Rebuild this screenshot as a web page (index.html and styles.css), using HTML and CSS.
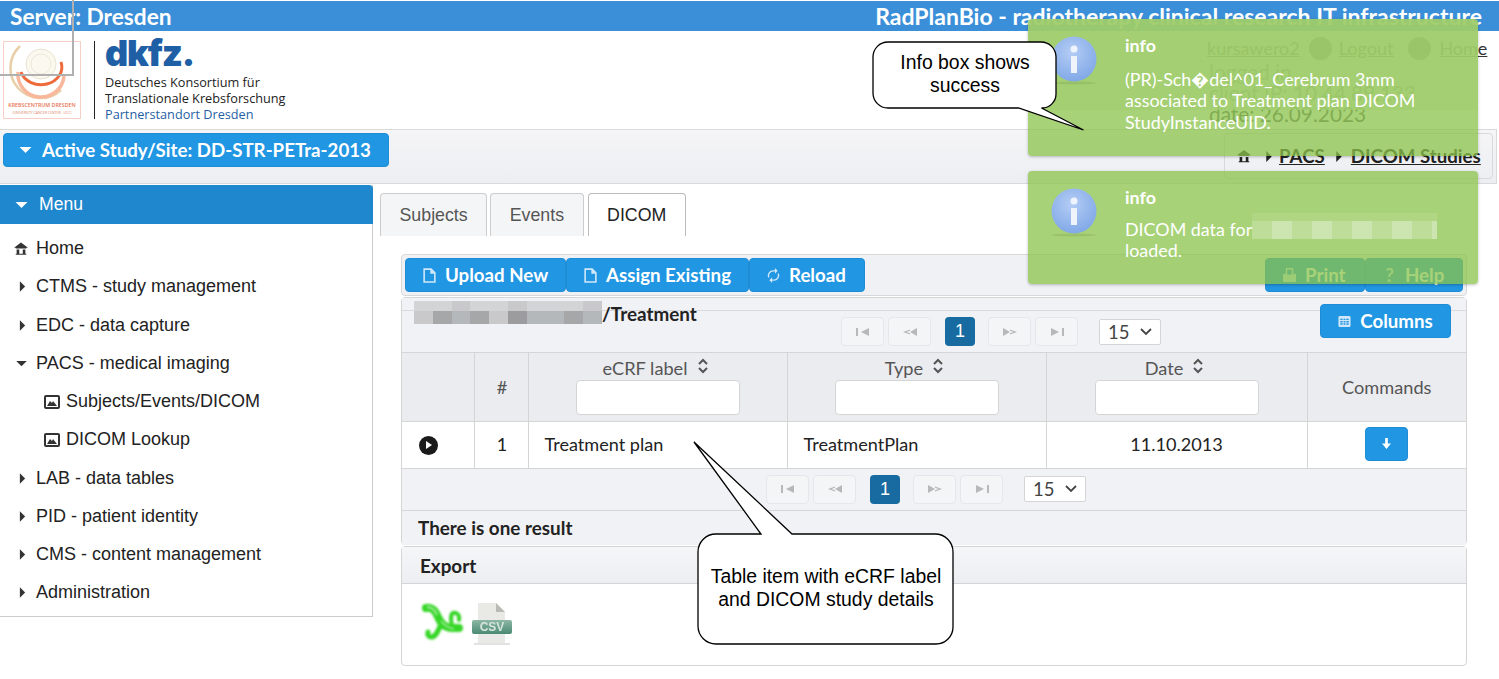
FILE: index.html
```html
<!DOCTYPE html>
<html lang="en">
<head>
    <meta charset="UTF-8">
    <title>RadPlanBio - DICOM Studies</title>
    <link rel="stylesheet" href="styles.css">
</head>
<body>
    <!-- Icon sprite -->
    <svg class="sprite" xmlns="http://www.w3.org/2000/svg">
        <symbol id="i-down" viewBox="0 0 12 8"><path d="M0 1h12L6 7z"/></symbol>
        <symbol id="i-right" viewBox="0 0 8 12"><path d="M1 0v12l6-6z"/></symbol>
        <symbol id="i-home" viewBox="0 0 16 14"><path d="M8 0 0 6h2v1h12V6h2zM3 8h3v5h4V8h3v5h1v1H2v-1h1z"/></symbol>
        <symbol id="i-image" viewBox="0 0 16 14"><path fill-rule="evenodd" d="M2 0h12a2 2 0 0 1 2 2v10a2 2 0 0 1-2 2H2a2 2 0 0 1-2-2V2a2 2 0 0 1 2-2zm0 2v10h12V2zm1 9 3-5 2 2 1-2 4 5z"/></symbol>
        <symbol id="i-page" viewBox="0 0 12 14"><path fill="none" stroke="currentColor" stroke-width="1.5" d="M1 1h6.500L11 4.500V13H1zM7.500 1v3.500H11"/></symbol>
        <symbol id="i-reload" viewBox="0 0 14 16"><path fill="none" stroke="currentColor" stroke-width="1.500" d="M2 10a5 5 0 0 1 5-7h2M12 6a5 5 0 0 1-5 7H5"/><path fill="currentColor" d="M8.500 0v6l3-3zM5.500 10v6l-3-3z"/></symbol>
        <symbol id="i-sort" viewBox="0 0 12 16"><path fill="none" stroke="currentColor" stroke-width="2" d="m2 6 4-4 4 4M2 10l4 4 4-4"/></symbol>
        <symbol id="i-chev" viewBox="0 0 12 8"><path fill="none" stroke="currentColor" stroke-width="1.800" d="m1 1 5 5 5-5"/></symbol>
        <symbol id="i-first" viewBox="0 0 14 8"><path d="M0 0h2v8H0zM13 0v8L5 4z"/></symbol>
        <symbol id="i-prev" viewBox="0 0 14 8"><path d="M14 0v8L7 4zM7 1.500v1.200L3.500 4 7 5.300v1.200L0 4z"/></symbol>
        <symbol id="i-next" viewBox="0 0 14 8"><path d="M0 0v8l7-4zM7 1.500v1.200L10.500 4 7 5.300v1.200L14 4z"/></symbol>
        <symbol id="i-last" viewBox="0 0 14 8"><path d="M14 0h-2v8h2zM1 0v8l8-4z"/></symbol>
    </svg>

    <!-- Top line -->
    <div class="topbar">
        <span>Server: Dresden</span>
        <span class="topbar-title">RadPlanBio - radiotherapy clinical research IT infrastructure</span>
    </div>

    <!-- Logos and user -->
    <div class="brand">
        <div class="logos">
            <svg class="kcd" viewBox="0 0 78 78" xmlns="http://www.w3.org/2000/svg">
                <rect x=".5" y=".5" width="77" height="77" fill="#fff" stroke="#f6cfc6"/>
                <circle cx="38" cy="23" r="15" fill="#fbf8f0" stroke="#e9e2d0"/>
                <circle cx="38" cy="23" r="10" fill="none" stroke="#eee8d9"/>
                <path d="M17 5A29 29 0 0 0 58 49" fill="none" stroke="#e8cfa8" stroke-width="2.500"/>
                <path d="M15 31a23 23 0 0 0 46 4" fill="none" stroke="#f9b79c" stroke-width="3.500"/>
                <path d="M18 31a20 17 0 0 0 40-10" fill="none" stroke="#ee6a3a" stroke-width="3"/>
                <text class="kcd-name" x="39" y="66" text-anchor="middle">KREBSCENTRUM DRESDEN</text>
                <text class="kcd-sub" x="39" y="73" text-anchor="middle">(UNIVERSITY CANCER CENTER - UCC)</text>
            </svg>
            <div class="dkfz">
                <div class="dkfz-mark">dkfz.</div>
                <div>Deutsches Konsortium für</div>
                <div>Translationale Krebsforschung</div>
                <div class="dkfz-site">Partnerstandort Dresden</div>
            </div>
        </div>
        <div class="user">
            <div class="user-links">
                <a>kursawero2</a>
                <span class="round"></span>
                <a>Logout</a>
                <span class="round"></span>
                <a>Home</a>
            </div>
            <div class="user-info">logged in</div>
            <div class="user-info">client IP: 10.44.89.133</div>
            <div class="user-info">date: 26.09.2023</div>
        </div>
    </div>

    <!-- Study selector and breadcrumb -->
    <div class="studybar">
        <button class="btn study"><svg class="ic-down"><use href="#i-down"/></svg>Active Study/Site: DD-STR-PETra-2013</button>
        <div class="crumbs">
            <svg class="crumb-home"><use href="#i-home"/></svg>
            <svg class="crumb-sep"><use href="#i-right"/></svg>
            <a>PACS</a>
            <svg class="crumb-sep"><use href="#i-right"/></svg>
            <a>DICOM Studies</a>
        </div>
    </div>

    <div class="main">
        <!-- Menu -->
        <div class="sidebar">
            <div class="menu-head"><svg class="ic-down"><use href="#i-down"/></svg>Menu</div>
            <div class="menu-list">
                <div class="menu-item"><svg class="ic-home"><use href="#i-home"/></svg>Home</div>
                <div class="menu-item"><svg class="ic-right"><use href="#i-right"/></svg>CTMS - study management</div>
                <div class="menu-item"><svg class="ic-right"><use href="#i-right"/></svg>EDC - data capture</div>
                <div class="menu-item"><svg class="ic-open"><use href="#i-down"/></svg>PACS - medical imaging</div>
                <div class="menu-item sub"><svg class="ic-image"><use href="#i-image"/></svg>Subjects/Events/DICOM</div>
                <div class="menu-item sub"><svg class="ic-image"><use href="#i-image"/></svg>DICOM Lookup</div>
                <div class="menu-item"><svg class="ic-right"><use href="#i-right"/></svg>LAB - data tables</div>
                <div class="menu-item"><svg class="ic-right"><use href="#i-right"/></svg>PID - patient identity</div>
                <div class="menu-item"><svg class="ic-right"><use href="#i-right"/></svg>CMS - content management</div>
                <div class="menu-item"><svg class="ic-right"><use href="#i-right"/></svg>Administration</div>
            </div>
        </div>

        <div class="content">
            <div class="tabs">
                <div class="tab">Subjects</div>
                <div class="tab">Events</div>
                <div class="tab active">DICOM</div>
            </div>

            <div class="tabpanel">
                <div class="toolbar">
                    <button class="btn"><svg class="ic-btn"><use href="#i-page"/></svg>Upload New</button>
                    <button class="btn"><svg class="ic-btn"><use href="#i-page"/></svg>Assign Existing</button>
                    <button class="btn"><svg class="ic-btn"><use href="#i-reload"/></svg>Reload</button>
                    <div class="spacer"></div>
                    <button class="btn print">
                        <svg class="ic-btn" viewBox="0 0 14 16"><path fill="currentColor" d="M3 0h8v6h2a1 1 0 0 1 1 1v7a1 1 0 0 1-1 1H1a1 1 0 0 1-1-1V7a1 1 0 0 1 1-1h2zm1.500 1.500V7h5V1.500z"/></svg>Print
                    </button>
                    <button class="btn help"><span class="q">?</span>Help</button>
                </div>

                <div class="datatable">
                    <div class="tablehead">
                        <div class="title">
                            <div class="mosaic">
                                <i class="m1"></i><i class="m1"></i><i class="m2"></i><i class="m1"></i><i class="m1"></i><i class="m2"></i><i class="m1"></i><i class="m1"></i><i class="m1"></i><i class="m2"></i>
                                <i class="m2"></i><i class="m4"></i><i class="m3"></i><i class="m4"></i><i class="m2"></i><i class="m5"></i><i class="m3"></i><i class="m3"></i><i class="m4"></i><i class="m3"></i>
                            </div>/Treatment
                        </div>
                        <div class="pager pager-top">
                            <span class="pg"><svg><use href="#i-first"/></svg></span>
                            <span class="pg"><svg><use href="#i-prev"/></svg></span>
                            <span class="pg-cur">1</span>
                            <span class="pg"><svg><use href="#i-next"/></svg></span>
                            <span class="pg"><svg><use href="#i-last"/></svg></span>
                            <span class="rows">15<svg><use href="#i-chev"/></svg></span>
                        </div>
                        <button class="btn columns">
                            <svg class="ic-btn" viewBox="0 0 14 14"><path fill="currentColor" fill-rule="evenodd" d="M2 1h10a1.500 1.500 0 0 1 1.500 1.500v9A1.500 1.500 0 0 1 12 13H2a1.500 1.500 0 0 1-1.500-1.500v-9A1.500 1.500 0 0 1 2 1zm.5 3v1.500h2.500V4zm3.500 0v1.500h2V4zm3 0v1.500h2.500V4zM2.500 6.500V8h2.500V6.500zm3.500 0V8h2V6.500zm3 0V8h2.500V6.500zM2.500 9v1.500h2.500V9zM6 9v1.500h2V9zm3 0v1.500h2.500V9z"/></svg>Columns
                        </button>
                    </div>

                    <table class="grid">
                        <colgroup>
                            <col class="c-toggle"><col class="c-num"><col class="c-col"><col class="c-col"><col class="c-date"><col>
                        </colgroup>
                        <thead>
                            <tr>
                                <th></th>
                                <th class="num">#</th>
                                <th><div class="th-label">eCRF label<svg class="ic-sort"><use href="#i-sort"/></svg></div><div class="filter"></div></th>
                                <th><div class="th-label">Type<svg class="ic-sort"><use href="#i-sort"/></svg></div><div class="filter"></div></th>
                                <th><div class="th-label">Date<svg class="ic-sort"><use href="#i-sort"/></svg></div><div class="filter"></div></th>
                                <th>Commands</th>
                            </tr>
                        </thead>
                        <tbody>
                            <tr>
                                <td class="toggle-cell"><span class="toggler"></span></td>
                                <td class="center num">1</td>
                                <td>Treatment plan</td>
                                <td>TreatmentPlan</td>
                                <td class="center">11.10.2013</td>
                                <td class="center">
                                    <button class="btn mini">
                                        <svg viewBox="0 0 10 12"><path fill="currentColor" d="M3.500 0h3v6H10l-5 6-5-6h3.500z"/></svg>
                                    </button>
                                </td>
                            </tr>
                        </tbody>
                    </table>

                    <div class="pager pager-bottom">
                        <span class="pg"><svg><use href="#i-first"/></svg></span>
                        <span class="pg"><svg><use href="#i-prev"/></svg></span>
                        <span class="pg-cur">1</span>
                        <span class="pg"><svg><use href="#i-next"/></svg></span>
                        <span class="pg"><svg><use href="#i-last"/></svg></span>
                        <span class="rows">15<svg><use href="#i-chev"/></svg></span>
                    </div>
                    <div class="tablefoot">There is one result</div>
                </div>

                <div class="export">
                    <div class="export-head">Export</div>
                    <div class="export-body">
                        <svg class="ic-xls" viewBox="0 0 46 46" xmlns="http://www.w3.org/2000/svg">
                            <path d="M6 8c6-1 9 2 12 9 3 7 8 11 14 11h7" fill="none" stroke="#35d626" stroke-width="8" stroke-linecap="round"/>
                            <path d="M22 22c-3 6-5 14-10 15-3 .5-5-2-4-5" fill="none" stroke="#35d626" stroke-width="5" stroke-linecap="round"/>
                            <path d="M32 26c-1-6-2-11 1-13 3-1 7 1 6 7" fill="none" stroke="#35d626" stroke-width="4" stroke-linecap="round"/>
                            <path d="M7 7c5 0 8 3 10 8" fill="none" stroke="#a5eca0" stroke-width="2"/>
                            <path d="M21 21c4 5 7 7 13 8" fill="none" stroke="#a5eca0" stroke-width="1.500"/>
                        </svg>
                        <svg class="ic-csv" viewBox="0 0 42 46" xmlns="http://www.w3.org/2000/svg">
                            <defs>
                                <linearGradient id="csv-band" x1="0" y1="0" x2="0" y2="1">
                                    <stop offset="0" stop-color="#8db7a5"/>
                                    <stop offset="1" stop-color="#4b8a72"/>
                                </linearGradient>
                            </defs>
                            <path d="M7 3h18l9 9v31H7z" fill="#e9e9e6"/>
                            <path d="M25 3l9 9h-9z" fill="#b9b9b5"/>
                            <rect x="1" y="20" width="40" height="14" rx="2" fill="url(#csv-band)"/>
                            <text class="csv-label" x="21" y="31" text-anchor="middle">CSV</text>
                            <path d="M3 44h36" stroke="#e2e2e2" stroke-width="2"/>
                        </svg>
                    </div>
                </div>
            </div>
        </div>
    </div>

    <!-- Grey frame line from the documentation figure -->
    <div class="frame-line"></div>

    <!-- Notifications -->
    <div class="note note-one">
        <svg class="note-icon"><use href="#note-info"/></svg>
        <div class="note-text">
            <div class="note-title">info</div>
            <div>(PR)-Sch�del^01_Cerebrum 3mm associated to Treatment plan DICOM StudyInstanceUID.</div>
        </div>
    </div>
    <div class="note note-two">
        <svg class="note-icon"><use href="#note-info"/></svg>
        <div class="note-text">
            <div class="note-title">info</div>
            <div>DICOM data for<span class="note-blur"></span> loaded.</div>
        </div>
    </div>
    <svg class="sprite" xmlns="http://www.w3.org/2000/svg">
        <defs>
            <radialGradient id="note-ball" cx=".45" cy=".35" r=".7">
                <stop offset="0" stop-color="#b4cdf5"/>
                <stop offset="1" stop-color="#7ea6e6"/>
            </radialGradient>
        </defs>
        <symbol id="note-info" viewBox="0 0 46 50">
            <ellipse cx="23" cy="47" rx="22" ry="1.500" fill="#7fa655" opacity=".35"/>
            <circle cx="23" cy="23" r="22.500" fill="url(#note-ball)"/>
            <circle cx="23" cy="13" r="3.500" fill="#eef3fc"/>
            <rect x="20" y="20" width="6" height="17" fill="#eef3fc"/>
        </symbol>
    </svg>

    <!-- Callouts -->
    <svg class="callout callout-info" viewBox="0 0 216 92" xmlns="http://www.w3.org/2000/svg">
        <path d="M16 1h153a15 15 0 0 1 15 15v37a14 14 0 0 1-14 14h-.5l42 22-65-22H16A15 15 0 0 1 1 52V16A15 15 0 0 1 16 1z" fill="#fff" stroke="#000" stroke-width="1.300"/>
        <text class="callout-text" x="93" y="28" text-anchor="middle">Info box shows</text>
        <text class="callout-text" x="93" y="51" text-anchor="middle">success</text>
    </svg>
    <svg class="callout callout-table" viewBox="0 0 264 206" xmlns="http://www.w3.org/2000/svg">
        <path d="M23 95h45L1 3l98 92h143a18 18 0 0 1 18 18v75a17 17 0 0 1-17 17H23a18 18 0 0 1-18-18v-74a18 18 0 0 1 18-18z" fill="#fff" stroke="#000" stroke-width="1.300"/>
        <text class="callout-text" x="133" y="144" text-anchor="middle">Table item with eCRF label</text>
        <text class="callout-text" x="133" y="167" text-anchor="middle">and DICOM study details</text>
    </svg>
</body>
</html>
```

FILE: styles.css
```css
html, body {
    margin: 0;
    padding: 0;
    background-color: #fff;
    overflow: hidden;
}
body {
    font-family: Lato, "Liberation Sans", sans-serif;
    font-size: 18.100px;
    color: #222;
    height: 679px;
    position: relative;
}
.sprite {
    position: absolute;
    width: 0;
    height: 0;
}

/* Top line */
.topbar {
    display: flex;
    justify-content: space-between;
    align-items: center;
    margin-top: 1px;
    height: 30px;
    padding: 0 17px 0 10px;
    background-color: #3a8fd8;
    color: #fff;
    font-weight: 700;
    font-size: 22.700px;
    white-space: nowrap;
}
.topbar-title {
    font-size: 23px;
}

/* Logos and user */
.brand {
    display: flex;
    justify-content: space-between;
    height: 98px;
}
.logos {
    display: flex;
    padding: 10px 0 0 3px;
}
.kcd {
    width: 78px;
    height: 78px;
}
.kcd-name {
    font-family: "Open Sans", sans-serif;
    font-size: 5.300px;
    font-weight: 600;
    fill: #e8744f;
}
.kcd-sub {
    font-family: "Open Sans", sans-serif;
    font-size: 3.500px;
    fill: #d9856c;
}
.dkfz {
    margin-left: 13px;
    height: 78px;
    padding-left: 10px;
    border-left: 1px solid #222;
    font-family: "Open Sans", sans-serif;
    font-size: 12.700px;
    line-height: 16px;
    color: #222;
    white-space: nowrap;
}
.dkfz-mark {
    height: 35px;
    margin-top: -2px;
    font-family: Inter, sans-serif;
    font-weight: 900;
    font-size: 36px;
    line-height: 28px;
    letter-spacing: -1.200px;
    color: #1f5fa5;
}
.dkfz-site {
    color: #1f5fa5;
}
.user {
    width: 292px;
    padding-top: 7px;
    box-sizing: border-box;
    font-size: 18px;
    color: #333;
}
.user-links {
    display: flex;
    align-items: center;
    height: 20px;
    margin-bottom: 3px;
}
.user-links a {
    text-decoration: underline;
}
.round {
    width: 23px;
    height: 23px;
    margin: 0 7px 0 9px;
    border-radius: 50%;
    background-color: #555;
}
.round + a + .round {
    margin: 0 8px 0 15px;
}
.user-info {
    height: 21px;
    padding-left: 2px;
    color: #666;
    font-size: 20.800px;
    line-height: 21px;
}

/* Study selector and breadcrumb */
.studybar {
    display: flex;
    justify-content: space-between;
    align-items: flex-start;
    height: 55px;
    box-sizing: border-box;
    margin-right: 2px;
    padding: 3px 3px 0 3px;
    border: 1px solid #d9d9d9;
    border-left: 0;
    background: linear-gradient(#f5f5f7, #eceef1);
}
.btn {
    display: inline-flex;
    align-items: center;
    height: 34px;
    padding: 0 17px;
    border: 1px solid #1f8dd6;
    border-radius: 4px;
    background-color: #2196e3;
    color: #fff;
    font-family: Lato, sans-serif;
    font-weight: 700;
    font-size: 18.700px;
    white-space: nowrap;
}
.study {
    width: 386px;
    padding-left: 15px;
}
.ic-down {
    width: 13px;
    height: 8px;
    margin-right: 10px;
    fill: #fff;
}
.crumbs {
    display: flex;
    align-items: center;
    width: 269px;
    height: 46px;
    box-sizing: border-box;
    padding: 0 0 0 12px;
    border: 1px solid #d9d9d9;
    border-radius: 4px;
    margin-left: auto;
    font-weight: 700;
    font-size: 18.700px;
    white-space: nowrap;
}
.crumbs a {
    text-decoration: underline;
}
.crumb-home {
    flex: none;
    width: 14px;
    height: 14px;
    margin-right: 14px;
    fill: #222;
}
.crumb-sep {
    flex: none;
    width: 8px;
    height: 11px;
    margin: 0 6px 0 0;
    fill: #222;
}
.crumbs a + .crumb-sep {
    margin-left: 10px;
    margin-right: 8px;
}

/* Main area */
.main {
    display: flex;
    margin-top: 1px;
}
.sidebar {
    width: 373px;
    height: 432px;
    box-sizing: border-box;
    border-right: 1px solid #ccc;
    border-bottom: 1px solid #ccc;
    font-family: "Liberation Sans", sans-serif;
    font-size: 18px;
}
.menu-head {
    display: flex;
    align-items: center;
    height: 39px;
    margin-right: -1px;
    padding-left: 15px;
    border-top-right-radius: 4px;
    background-color: #1f87cd;
    color: #fff;
    font-size: 17.600px;
}
.menu-head .ic-down {
    margin-right: 11px;
}
.menu-list {
    padding-top: 5.500px;
}
.menu-item {
    display: flex;
    align-items: center;
    height: 38.250px;
    padding-left: 36px;
    position: relative;
    white-space: nowrap;
}
.menu-item svg {
    position: absolute;
    fill: #333;
}
.ic-home {
    left: 14px;
    width: 14px;
    height: 13px;
}
.ic-right {
    left: 19px;
    width: 7px;
    height: 11px;
}
.ic-open {
    left: 16px;
    width: 11px;
    height: 7px;
}
.menu-item.sub {
    padding-left: 66px;
}
.ic-image {
    left: 44px;
    width: 16px;
    height: 14px;
}

/* Tabs */
.content {
    width: 1087px;
    margin-left: 7px;
}
.tabs {
    display: flex;
    gap: 3px;
    margin-top: 8px;
    height: 43px;
    font-family: "Liberation Sans", sans-serif;
    font-size: 17.800px;
}
.tab {
    display: flex;
    align-items: center;
    height: 43px;
    box-sizing: border-box;
    padding: 0 18.500px;
    border: 1px solid #ccc;
    border-bottom: 0;
    border-radius: 4px 4px 0 0;
    background-color: #f4f5f7;
    color: #555;
}
.tab.active {
    margin-left: 1px;
    border-color: #bbb;
    background-color: #fff;
    color: #222;
}
.tabpanel {
    padding: 18px 0 0 21px;
}

/* Toolbar */
.toolbar {
    display: flex;
    height: 42px;
    box-sizing: border-box;
    padding: 3px;
    border: 1px solid #d8d8d8;
    border-radius: 4px;
    background-color: #f0f1f4;
}
.spacer {
    flex: 1;
}
.toolbar .btn {
    width: 161px;
    box-sizing: border-box;
}
.toolbar .btn:nth-child(2) {
    width: 183px;
}
.toolbar .btn:nth-child(3) {
    width: 116px;
}
.toolbar .print {
    width: 100px;
}
.toolbar .help {
    width: 98px;
}
.ic-btn {
    flex: none;
    width: 13px;
    height: 15px;
    margin-right: 9px;
    color: #cfe7f9;
}
.q {
    width: 13px;
    margin-right: 9px;
    color: #cfe7f9;
}

/* Table */
.datatable {
    margin-top: 1px;
    height: 248px;
    box-sizing: border-box;
    border: 1px solid #d5d5d5;
    border-radius: 4px;
}
.tablehead {
    display: flex;
    height: 55px;
    box-sizing: border-box;
    border-bottom: 1px solid #d5d5d5;
    background: linear-gradient(#d9dadd, #d9dadd) 0 12px / 100% 1px no-repeat, #f1f2f5;
}
.title {
    display: flex;
    width: 439px;
    height: 23px;
    flex: none;
    box-sizing: border-box;
    padding: 3px 0 0 12px;
    font-weight: 700;
    font-size: 18.850px;
    line-height: 26px;
}
.mosaic {
    display: grid;
    grid-template-columns: repeat(10, 18.800px);
    grid-template-rows: 10px 13px;
    flex: none;
}
.m1 { background-color: #d3d4d6; }
.m2 { background-color: #c9c9cb; }
.m3 { background-color: #b5b8ba; }
.m4 { background-color: #a6a7a8; }
.m5 { background-color: #9c9c9e; }
.pager {
    display: flex;
    align-items: center;
}
.pager-top {
    height: 29px;
    margin-top: 19px;
}
.pager-bottom {
    height: 42px;
    box-sizing: border-box;
    padding-left: 364px;
    border-bottom: 1px solid #d5d5d5;
    background-color: #f1f2f5;
}
.pg {
    display: flex;
    align-items: center;
    justify-content: center;
    width: 43px;
    height: 29px;
    box-sizing: border-box;
    margin-right: 4px;
    border: 1px solid #e6e7ea;
    border-radius: 4px;
    background-color: #f4f5f7;
}
.pg svg {
    width: 14px;
    height: 8px;
    fill: #b8b8b8;
}
.pg:nth-child(2) {
    margin-right: 14px;
}
.pg-cur {
    display: flex;
    align-items: center;
    justify-content: center;
    width: 30px;
    height: 29px;
    margin-right: 13px;
    border-radius: 4px;
    background-color: #186ba0;
    color: #fff;
    font-family: "Liberation Sans", sans-serif;
    font-size: 18px;
}
.rows {
    display: flex;
    align-items: center;
    justify-content: space-between;
    width: 62px;
    height: 26px;
    box-sizing: border-box;
    margin-left: 17px;
    padding: 0 8px;
    border: 1px solid #d5d5d5;
    border-radius: 2px;
    background-color: #fff;
    color: #444;
    font-size: 18.500px;
}
.rows svg {
    width: 12px;
    height: 8px;
    color: #444;
}
.columns {
    position: relative;
    width: 131px;
    box-sizing: border-box;
    margin: 6px 0 0 159px;
    justify-content: center;
    padding: 0;
}
.grid {
    width: 100%;
    border-collapse: collapse;
    table-layout: fixed;
}
.c-toggle { width: 72px; }
.c-num { width: 54px; }
.c-col { width: 259px; }
.c-date { width: 261px; }
.grid th {
    height: 68px;
    box-sizing: border-box;
    padding: 0;
    border-left: 1px solid #d5d5d5;
    border-bottom: 1px solid #d5d5d5;
    background-color: #ebecf0;
    color: #555;
    font-weight: 400;
    font-size: 18.200px;
    text-align: center;
}
.grid td {
    height: 47px;
    box-sizing: border-box;
    padding: 0 16px 2px;
    border-left: 1px solid #d5d5d5;
    border-bottom: 1px solid #d5d5d5;
}
.grid tr > :first-child {
    border-left: 0;
}
.grid td.center {
    padding: 0 0 2px;
    text-align: center;
}
.grid .num,
.grid td.num {
    padding-left: 2px;
}
.grid td.toggle-cell {
    padding: 0 0 2px 17px;
}
.th-label {
    display: flex;
    align-items: center;
    justify-content: center;
    height: 20px;
    margin-top: -1px;
    padding-right: 4px;
}
.ic-sort {
    width: 12px;
    height: 16px;
    margin: -3px 0 0 9px;
    color: #555;
}
.filter {
    width: 164px;
    height: 35px;
    box-sizing: border-box;
    margin: 2px auto 0;
    border: 1px solid #d5d5d5;
    border-radius: 4px;
    background-color: #fff;
}
.toggler {
    display: inline-flex;
    width: 19px;
    height: 19px;
    border-radius: 50%;
    background-color: #1a1a1a;
    vertical-align: middle;
    position: relative;
}
.toggler::after {
    content: "";
    position: absolute;
    left: 7px;
    top: 5px;
    border-left: 6px solid #fff;
    border-top: 4.500px solid transparent;
    border-bottom: 4.500px solid transparent;
}
.mini {
    width: 43px;
    height: 34px;
    padding: 0;
    justify-content: center;
    vertical-align: middle;
}
.mini svg {
    width: 9px;
    height: 11px;
}
.tablefoot {
    height: 34px;
    padding-left: 16px;
    background-color: #f1f2f5;
    font-weight: 700;
    font-size: 18.850px;
    line-height: 34px;
}

/* Export */
.export {
    margin-top: 1px;
    height: 120px;
    box-sizing: border-box;
    border: 1px solid #d5d5d5;
    border-radius: 4px;
}
.export-head {
    height: 37px;
    box-sizing: border-box;
    padding-left: 18px;
    border-bottom: 1px solid #d5d5d5;
    background: linear-gradient(#f5f6f8, #eceef1);
    font-weight: 700;
    font-size: 18.850px;
    line-height: 37px;
}
.export-body {
    display: flex;
    padding: 16px 0 0 18px;
}
.ic-xls {
    width: 46px;
    height: 46px;
    filter: blur(.8px);
}
.ic-csv {
    width: 42px;
    height: 46px;
    margin-left: 5px;
    filter: blur(.5px);
}
.csv-label {
    font-family: "Liberation Sans", sans-serif;
    font-weight: 700;
    font-size: 12px;
    fill: #d5e4dd;
}

/* Overlays */
.frame-line {
    position: absolute;
    left: 0;
    top: 0;
    width: 72px;
    height: 74px;
    border-right: 2px solid #b0b0b0;
    border-bottom: 2px solid #b0b0b0;
}
.note {
    position: absolute;
    left: 1028px;
    width: 450px;
    box-sizing: border-box;
    display: flex;
    padding-left: 23px;
    border-radius: 4px;
    background-color: rgba(139, 195, 74, .75);
    box-shadow: 0 1px 3px rgba(0, 0, 0, .25);
    color: #fff;
    font-size: 17.900px;
    line-height: 21.500px;
}
.note-one {
    top: 19px;
    height: 137px;
    background: linear-gradient(rgba(158, 204, 105, .94) 91px, rgba(139, 195, 74, .75) 91px);
}
.note-two {
    top: 171px;
    height: 113px;
}
.note-icon {
    flex: none;
    width: 46px;
    height: 50px;
    margin-top: 17px;
}
.note-text {
    width: 325px;
    margin-left: 28px;
}
.note-title {
    margin: 16px 0 12px;
    font-weight: 700;
}
.note-two .note-title {
    margin-bottom: 10px;
}
.note-blur {
    display: inline-block;
    width: 185px;
    height: 18px;
    vertical-align: -3px;
    background: repeating-linear-gradient(90deg, rgba(255, 255, 255, .25) 0 20px, rgba(255, 255, 255, .42) 20px 40px);
    box-shadow: 0 -8px 0 rgba(255, 255, 255, .1);
}
.callout {
    position: absolute;
    overflow: visible;
}
.callout-info {
    left: 872px;
    top: 41px;
    width: 216px;
    height: 92px;
}
.callout-table {
    left: 693px;
    top: 439px;
    width: 264px;
    height: 206px;
}
.callout-text {
    font-family: "Liberation Sans", sans-serif;
    font-size: 19.400px;
    fill: #000;
}
```
